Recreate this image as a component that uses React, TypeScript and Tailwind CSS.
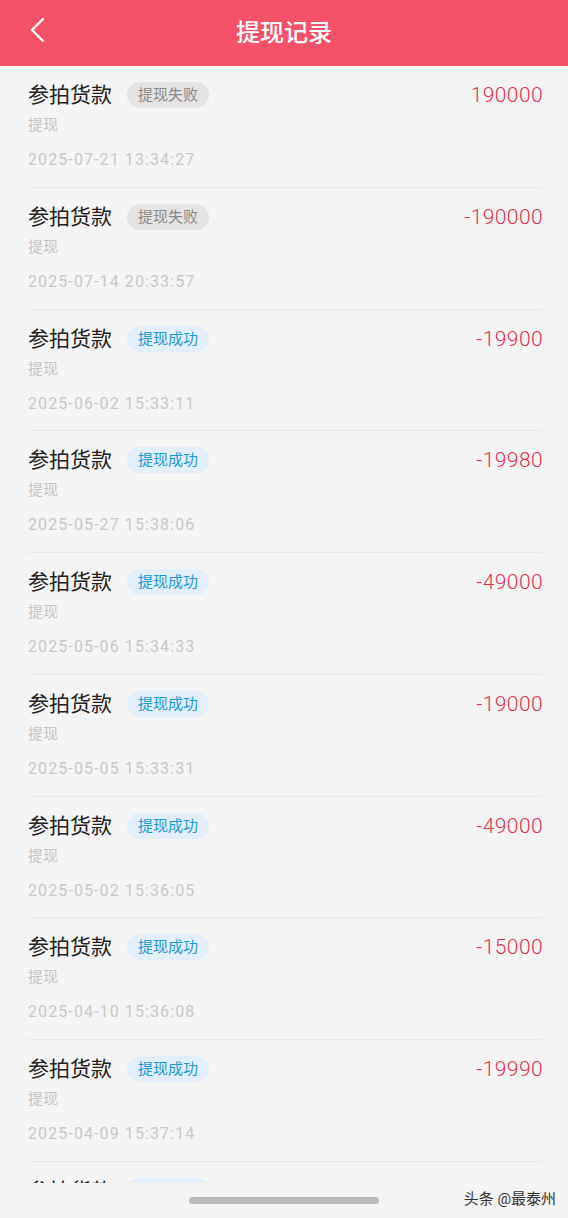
import React from "react";

const records = [
  { ok: false, amount: "190000", time: "2025-07-21 13:34:27" },
  { ok: false, amount: "-190000", time: "2025-07-14 20:33:57" },
  { ok: true, amount: "-19900", time: "2025-06-02 15:33:11" },
  { ok: true, amount: "-19980", time: "2025-05-27 15:38:06" },
  { ok: true, amount: "-49000", time: "2025-05-06 15:34:33" },
  { ok: true, amount: "-19000", time: "2025-05-05 15:33:31" },
  { ok: true, amount: "-49000", time: "2025-05-02 15:36:05" },
  { ok: true, amount: "-15000", time: "2025-04-10 15:36:08" },
  { ok: true, amount: "-19990", time: "2025-04-09 15:37:14" },
  { ok: true, amount: "-19990", time: "2025-04-08 15:30:02" },
];

function Row({ ok, amount, time }: any) {
  return (
    <div className="ml-[28px] mr-[25px] h-[121.75px] box-border border-b border-[#e9e9e9] pt-[16px]">
      <div className="flex h-[26px] items-center justify-between">
        <div className="flex items-center">
          <span className="text-[21px] leading-[26px] text-[#222]">参拍货款</span>
          <span
            className={
              ok
                ? "ml-[15px] h-[26px] rounded-full bg-[#e2eef9] px-[11px] text-[15px] leading-[26px] text-[#1a9ad6]"
                : "ml-[15px] h-[26px] rounded-full bg-[#e4e4e4] px-[11px] text-[15px] leading-[26px] text-[#8a8a8a]"
            }
          >
            {ok ? "提现成功" : "提现失败"}
          </span>
        </div>
        <span className="text-[21px] font-light leading-[26px] tracking-[0.4px] text-[#e2304f]">{amount}</span>
      </div>
      <div className="mt-[7px] text-[15px] leading-[20px] text-[#c4c4c4]">提现</div>
      <div className="mt-[14px] text-[16px] leading-[22px] tracking-[1.1px] text-[#c8c8c8]">{time}</div>
    </div>
  );
}

export default function App() {
  return (
    <div
      className="relative flex h-[1218px] w-full flex-col overflow-hidden bg-[#f4f4f4]"
      style={{ fontFamily: '"Roboto", "Noto Sans CJK SC", sans-serif' }}
    >
      <div className="relative flex h-[66px] shrink-0 items-center justify-center bg-[#f5526a]">
        <svg
          className="absolute left-[28px] top-[17px]"
          width="20"
          height="26"
          viewBox="0 0 20 26"
          fill="none"
        >
          <path d="M15 2 L4 13 L15 24" stroke="#fff" strokeWidth="2.4" strokeLinecap="round" strokeLinejoin="round" />
        </svg>
        <span className="text-[24px] font-medium text-white">提现记录</span>
      </div>
      <div className="h-[1117px] shrink-0 overflow-hidden">
        {records.map((r, i) => (
          <Row key={i} {...r} />
        ))}
      </div>
      <div className="relative flex flex-1 justify-center pt-[14px]">
        <div className="h-[7px] w-[190px] rounded-full bg-[#bdbbb9]" />
        <span className="absolute right-[12px] top-[5px] text-[15px] text-[#333]">头条 @最泰州</span>
      </div>
    </div>
  );
}
